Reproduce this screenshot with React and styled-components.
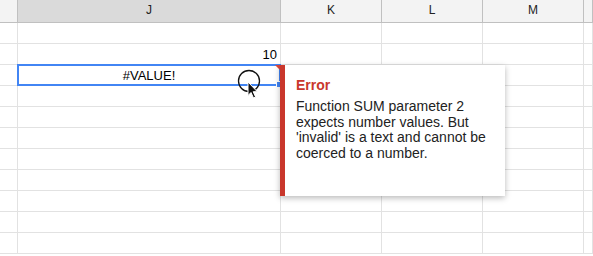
import React from "react";
import styled, { createGlobalStyle } from "styled-components";

const Global = createGlobalStyle`
  html, body { margin: 0; padding: 0; background: #fff; }
  body { font-family: Arial, "Liberation Sans", sans-serif; overflow: hidden; }
`;

const Sheet = styled.div`
  position: relative;
  width: 593px;
  height: 256px;
  overflow: hidden;
  background: #fff;
`;

const Grid = styled.div`
  display: grid;
  grid-template-columns: 18px 263px 101px 101px 101px 1fr;
  grid-template-rows: 23px repeat(11, 21px);
`;

const HeadCell = styled.div`
  box-sizing: border-box;
  background: ${(p) => (p.$active ? "#dadada" : "#f3f3f3")};
  border-right: 1px solid #c0c0c0;
  border-bottom: 1px solid #c0c0c0;
  display: flex;
  align-items: center;
  justify-content: center;
  font-family: Arial, "Liberation Sans", sans-serif;
  font-size: 12px;
  color: #222;
  padding-bottom: 2px;
`;

const Cell = styled.div`
  position: relative;
  box-sizing: border-box;
  border-right: 1px solid #e2e2e2;
  border-bottom: 1px solid #e2e2e2;
  font-family: Arial, "Liberation Sans", sans-serif;
  font-size: 13px;
  color: #000;
  display: flex;
  align-items: center;
  justify-content: ${(p) => (p.$align === "right" ? "flex-end" : p.$align === "center" ? "center" : "flex-start")};
  padding: 1px 3px 0 3px;
`;

const Selection = styled.div`
  position: absolute;
  left: -1px;
  top: -1px;
  right: -1px;
  bottom: -1px;
  border: 2px solid #4285f4;
  pointer-events: none;
`;

const ErrorMark = styled.div`
  position: absolute;
  top: 0;
  right: 0;
  width: 0;
  height: 0;
  border-top: 5px solid #db4437;
  border-left: 5px solid transparent;
`;

const FillHandle = styled.div`
  position: absolute;
  right: -2px;
  bottom: -3px;
  width: 5px;
  height: 5px;
  background: #4285f4;
  border: 1px solid #fff;
  border-right: none;
  box-sizing: content-box;
`;

const Tooltip = styled.div`
  position: absolute;
  left: 280px;
  top: 65px;
  width: 225px;
  height: 131px;
  box-sizing: border-box;
  background: #fff;
  border-left: 5px solid #c9372c;
  box-shadow: 0 2px 6px rgba(0, 0, 0, 0.28);
  padding: 12px 14px 12px 11px;
  font-family: Arial, "Liberation Sans", sans-serif;
`;

const TipTitle = styled.div`
  font-size: 14px;
  font-weight: bold;
  color: #c9372c;
  line-height: 16px;
  margin-bottom: 6px;
`;

const TipBody = styled.div`
  font-size: 14px;
  line-height: 15.7px;
  color: #222;
`;

const CursorSvg = styled.svg`
  position: absolute;
  left: 236px;
  top: 68px;
  pointer-events: none;
`;

const columns = ["", "J", "K", "L", "M", ""];

export default function App() {
  const rows = Array.from({ length: 11 }, (_, i) => i);
  return (
    <Sheet>
      <Global />
      <Grid>
        {columns.map((c, i) => (
          <HeadCell key={"h" + i} $active={c === "J"}>
            {c}
          </HeadCell>
        ))}
        {rows.map((r) =>
          columns.map((c, i) => {
            let content = null;
            let align = "left";
            let extra = null;
            if (c === "J" && r === 1) {
              content = "10";
              align = "right";
            }
            if (c === "J" && r === 2) {
              content = "#VALUE!";
              align = "center";
              extra = (
                <>
                  <Selection />
                  <ErrorMark />
                  <FillHandle />
                </>
              );
            }
            return (
              <Cell key={r + "-" + i} $align={align}>
                {content}
                {extra}
              </Cell>
            );
          })
        )}
      </Grid>
      <Tooltip>
        <TipTitle>Error</TipTitle>
        <TipBody>
          Function SUM parameter 2 expects number values. But 'invalid' is a text and cannot be coerced to a number.
        </TipBody>
      </Tooltip>
      <CursorSvg width="30" height="32" viewBox="0 0 30 32">
        <circle cx="13" cy="13" r="10.5" fill="none" stroke="#111" strokeWidth="1.3" />
        <path
          d="M12 14 L12 27.5 L15 24.5 L17.5 30 L19.6 29 L17.2 23.7 L21.3 23.7 Z"
          fill="#111"
          stroke="#fff"
          strokeWidth="1"
          strokeLinejoin="round"
        />
      </CursorSvg>
    </Sheet>
  );
}
